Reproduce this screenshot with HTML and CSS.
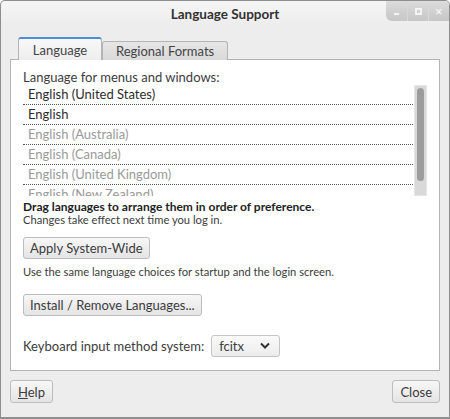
FILE: index.html
```html
<!DOCTYPE html>
<html lang="en">
<head>
  <meta charset="UTF-8">
  <title>Language Support</title>
  <link rel="stylesheet" href="styles.css">
</head>
<body>
  <div class="window">
    <div class="titlebar">
      <span class="title">Language Support</span>
      <div class="wm-buttons">
        <span class="wm-btn"><span class="wm-min"></span></span>
        <span class="wm-btn"><span class="wm-max"></span></span>
        <span class="wm-btn wm-close">&#x2715;</span>
      </div>
    </div>

    <div class="content">
      <div class="tabs">
        <div class="tab active">Language</div>
        <div class="tab">Regional Formats</div>
      </div>

      <div class="panel">
        <p class="label">Language for menus and windows:</p>
        <div class="list-wrap">
          <ul class="lang-list">
            <li>English (United States)</li>
            <li>English</li>
            <li class="off">English (Australia)</li>
            <li class="off">English (Canada)</li>
            <li class="off">English (United Kingdom)</li>
            <li class="off cut">English (New Zealand)</li>
          </ul>
          <div class="scrollbar"><div class="thumb"></div></div>
        </div>
        <p class="hint-bold">Drag languages to arrange them in order of preference.</p>
        <p class="hint">Changes take effect next time you log in.</p>

        <button class="btn apply">Apply System-Wide</button>
        <p class="hint use">Use the same language choices for startup and the login screen.</p>

        <button class="btn install">Install / Remove Languages...</button>

        <div class="im-row">
          <span>Keyboard input method system:</span>
          <div class="select">
            <span>fcitx</span>
            <svg width="12" height="8" viewBox="0 0 12 8"><path d="M2 1.5 L6 5.5 L10 1.5" fill="none" stroke="#333" stroke-width="2"/></svg>
          </div>
        </div>
      </div>

      <div class="footer">
        <button class="btn"><u>H</u>elp</button>
        <button class="btn">Close</button>
      </div>
    </div>
  </div>
</body>
</html>
```

FILE: styles.css
```css
* {
  box-sizing: border-box;
}
body {
  margin: 0;
  font-family: Lato, "Open Sans", sans-serif;
  font-size: 13px;
  color: #3c3c3c;
  background: #fff;
}
.window {
  width: 450px;
  height: 419px;
  background: #ededed;
  border: 1px solid #8e8e8e;
  border-bottom-width: 2px;
  border-radius: 5px 5px 0 0;
  position: relative;
}
.titlebar {
  height: 24px;
  display: flex;
  align-items: center;
  justify-content: center;
  background: linear-gradient(#f6f6f6, #ededed);
  border-radius: 5px 5px 0 0;
}
.title {
  font-weight: bold;
  font-size: 13.5px;
  color: #333;
  margin-top: 1px;
}
.wm-buttons {
  position: absolute;
  top: 0;
  right: 0;
  display: flex;
  height: 20px;
  background: linear-gradient(#dcdcdc, #c6c6c6);
  border-radius: 0 4px 0 6px;
}
.wm-btn {
  width: 21px;
  display: flex;
  align-items: center;
  justify-content: center;
  border-left: 1px solid #d8d8d8;
  color: #f4f4f4;
  font-size: 9px;
  font-weight: bold;
}
.wm-btn:first-child {
  border-left: none;
}
.wm-min {
  width: 5px;
  height: 2px;
  background: #f4f4f4;
  margin-top: 6px;
}
.wm-max {
  width: 7px;
  height: 7px;
  border: 2px solid #f4f4f4;
}
.content {
  padding: 12px 9px 0 9px;
}
.tabs {
  display: flex;
  align-items: flex-end;
  height: 22px;
  padding-left: 8px;
}
.tab {
  height: 19px;
  padding: 0 13px 0 13px;
  border: 1px solid #b4b4b4;
  border-bottom: none;
  border-radius: 3px 3px 0 0;
  background: linear-gradient(#e6e6e6, #d9d9d9);
  display: flex;
  align-items: center;
  color: #444;
  margin-bottom: -1px;
}
.tab.active {
  height: 23px;
  width: 84px;
  justify-content: center;
  background: linear-gradient(#f8f8f8, #eeeeee);
  border-color: #b4b4b4;
  border-top: 2px solid #4a8fd7;
  position: relative;
  z-index: 1;
  padding: 0;
}
.panel {
  height: 312px;
  background: #fff;
  border: 1px solid #b4b4b4;
  padding: 9px 12px 0 12px;
}
p {
  margin: 0;
}
.label {
  line-height: 16px;
  color: #3c3c3c;
}
.list-wrap {
  display: flex;
  height: 111px;
  overflow: hidden;
}
.lang-list {
  list-style: none;
  margin: 0;
  padding: 0;
  flex: 1;
  height: 111px;
  overflow: hidden;
}
.lang-list li {
  height: 20px;
  line-height: 19px;
  padding-left: 5px;
  border-bottom: 1px dotted #555;
  color: #2c2c2c;
}
.lang-list li.off {
  color: #9a9a9a;
}
.lang-list li.cut {
  height: 11px;
  border-bottom: none;
  overflow: hidden;
}
.scrollbar {
  width: 13px;
  margin-left: 1px;
  background: #d9d9d9;
  border: 1px solid #e6e6e6;
  padding: 2px 2px;
}
.thumb {
  height: 93px;
  background: #9c9c9c;
  border-radius: 4px;
}
.hint-bold {
  font-weight: bold;
  font-size: 12px;
  line-height: 13px;
  margin-top: 4px;
  color: #222;
}
.hint {
  font-size: 11.2px;
  line-height: 13px;
  color: #3c3c3c;
}
.btn {
  font-family: Lato, "Open Sans", sans-serif;
  font-size: 13px;
  color: #3c3c3c;
  height: 22px;
  padding: 0 6px;
  border: 1px solid #bdbdbd;
  border-radius: 3px;
  background: linear-gradient(#f7f7f7, #e4e4e4);
  display: block;
}
.apply {
  margin-top: 11px;
}
.use {
  margin-top: 6px;
}
.install {
  margin-top: 16px;
}
.im-row {
  display: flex;
  align-items: center;
  margin-top: 19px;
  gap: 7px;
}
.select {
  width: 69px;
  height: 22px;
  border: 1px solid #c4c4c4;
  border-radius: 3px;
  background: linear-gradient(#fafafa, #ececec);
  display: flex;
  align-items: center;
  justify-content: space-between;
  padding: 0 8px 0 7px;
}
.footer {
  display: flex;
  justify-content: space-between;
  margin-top: 9px;
}
.footer .btn {
  height: 23px;
  padding: 0 7px;
}
.footer .btn u {
  text-decoration: underline;
}
```
